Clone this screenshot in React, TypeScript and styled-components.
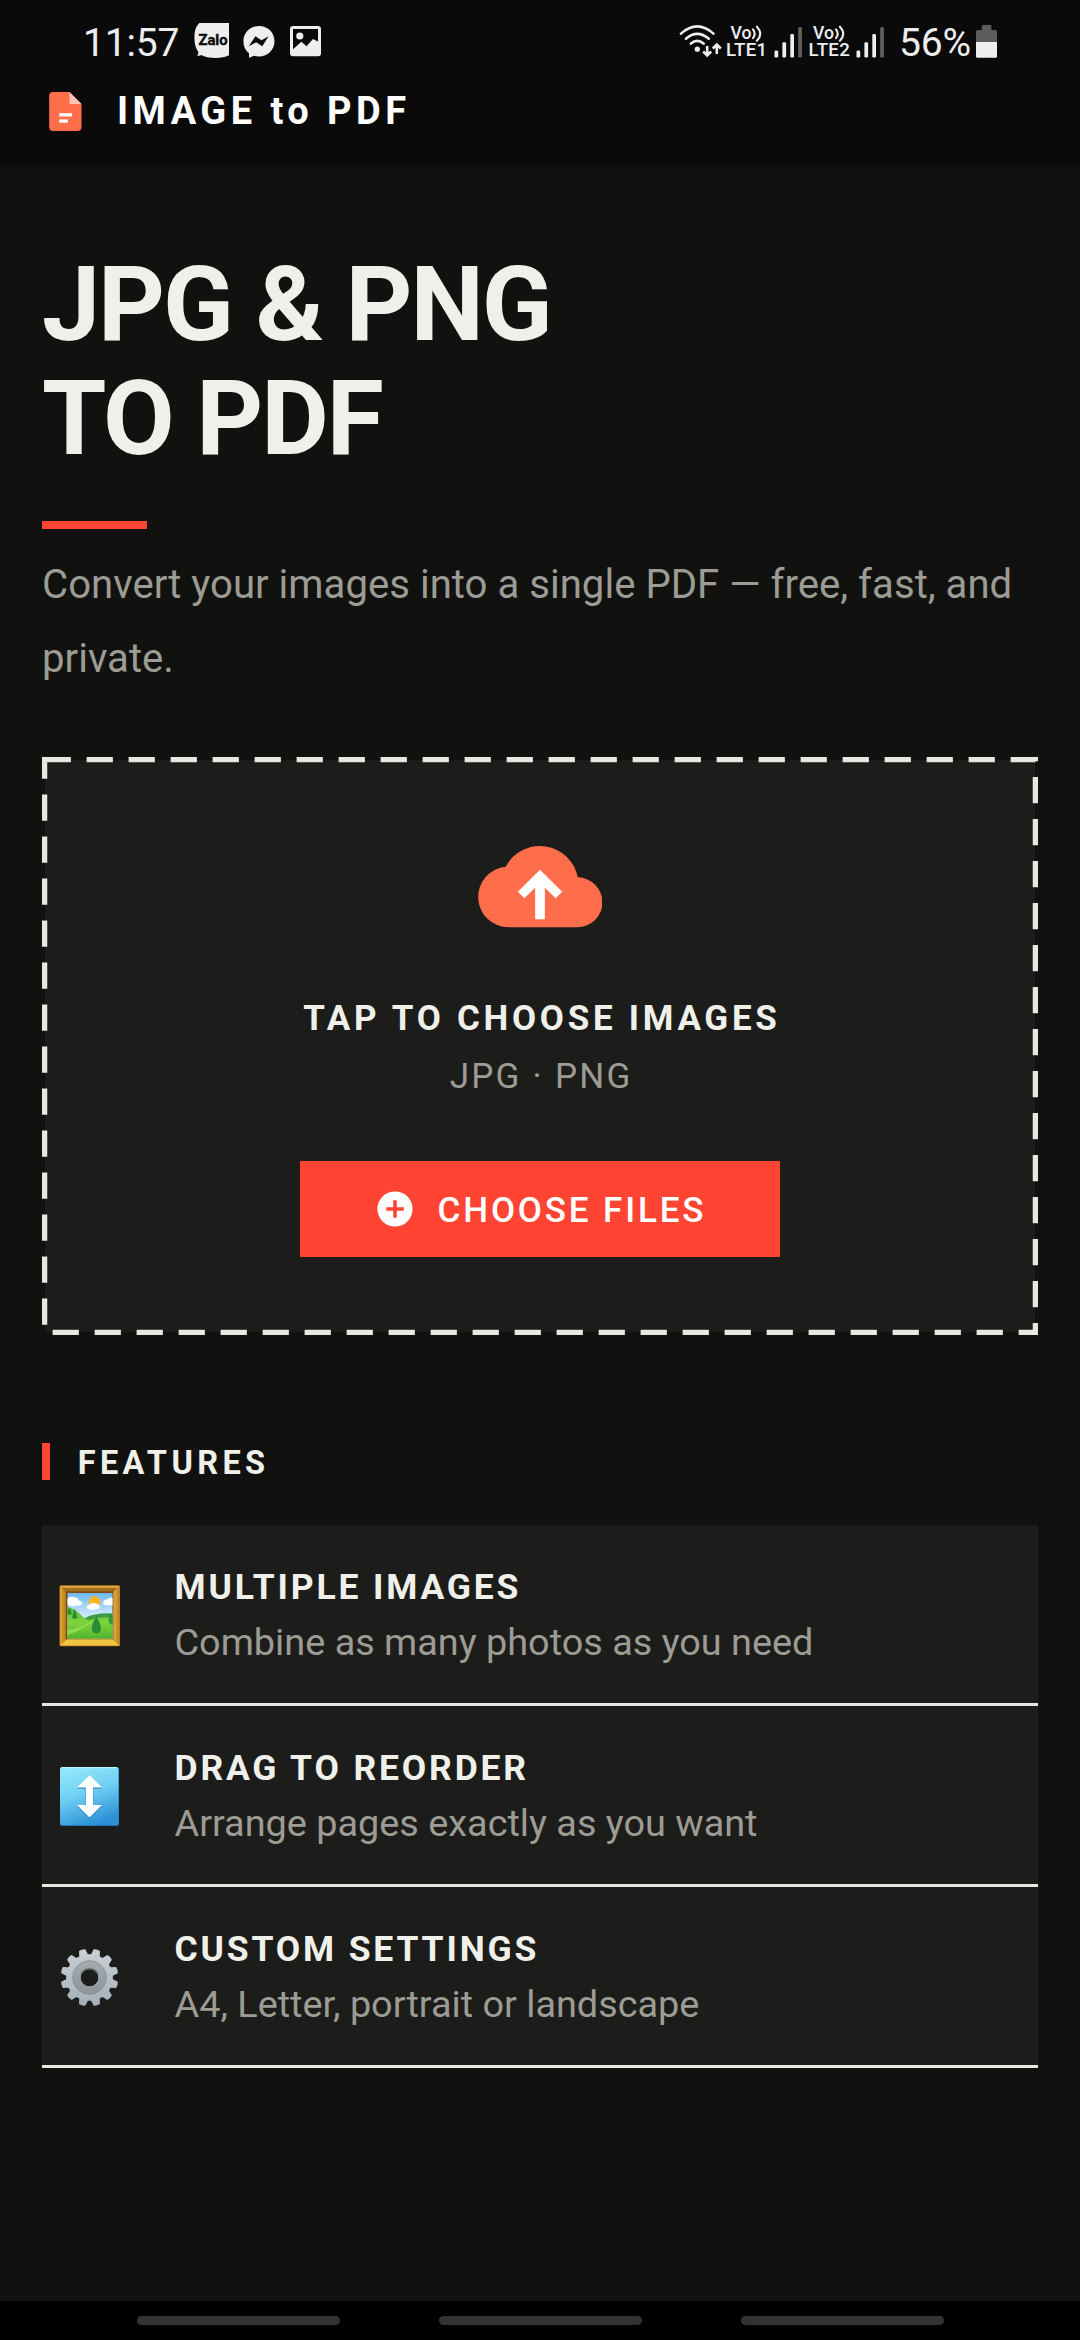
import React from "react";
import styled, { createGlobalStyle } from "styled-components";

const color = {
  header: "#0a0a0a",
  page: "#111110",
  card: "#1c1c1a",
  ink: "#f0f0ea",
  muted: "#9c9c94",
  line: "#e8e8e2",
  accent: "#ff4433",
  coral: "#ff6e4a",
  status: "#eeeeee",
};

const GlobalStyle = createGlobalStyle`
  * { box-sizing: border-box; }
  body {
    margin: 0;
    background: ${color.page};
    font-family: Roboto, "Noto Sans", sans-serif;
    -webkit-font-smoothing: antialiased;
  }
  svg { display: block; flex: none; }
`;

const Screen = styled.div`
  width: 1080px;
  height: 2340px;
  display: flex;
  flex-direction: column;
  background: ${color.page};
  overflow: hidden;
`;

/* ---------- top area ---------- */

const TopArea = styled.header`
  height: 167px;
  background: ${color.header};
`;

const StatusBar = styled.div`
  height: 82px;
  padding: 23px 83px 0 83px;
  display: flex;
  align-items: flex-start;
  justify-content: space-between;
  color: ${color.status};
`;

const StatusGroup = styled.div`
  display: flex;
  align-items: flex-start;
`;

const StatusText = styled.span<{ $width: number }>`
  width: ${(p) => p.$width}px;
  font-size: 39px;
  line-height: 41px;
  letter-spacing: -0.2px;
  white-space: nowrap;
`;

const Notifications = styled.div`
  display: flex;
  gap: 14px;
`;

const NetworkGroup = styled.div`
  display: flex;
  align-items: flex-start;
  gap: 2px;
  margin-right: 9.8px;
`;

const Sim = styled.div`
  display: flex;
  align-items: flex-start;
`;

const NetworkLabel = styled.div`
  width: 44.6px;
  display: flex;
  flex-direction: column;
  font-weight: 500;
`;

const VoiceLine = styled.div`
  height: 19px;
  padding-left: 4.5px;
  display: flex;
  font-size: 17.6px;
  line-height: 20px;
`;

const LteLine = styled.div`
  font-size: 18.6px;
  line-height: 17px;
  letter-spacing: 0.3px;
`;

const AppBar = styled.div`
  height: 85px;
  padding: 10px 49px 0;
  display: flex;
  align-items: flex-start;
`;

const AppName = styled.div`
  margin-left: 35px;
  font-size: 38px;
  font-weight: 700;
  line-height: 39px;
  letter-spacing: 4.47px;
  color: #fff;
`;

/* ---------- content ---------- */

const Main = styled.main`
  height: 2134px;
  padding: 81px 42px 0;
`;

const Title = styled.h1`
  margin: 0;
  font-size: 104px;
  font-weight: 700;
  line-height: 114px;
  letter-spacing: -2.09px;
  color: ${color.ink};
`;

const Rule = styled.div`
  width: 105px;
  height: 8px;
  margin-top: 45px;
  background: ${color.accent};
`;

const Lead = styled.p`
  margin: 19px 0 0;
  font-size: 40.15px;
  line-height: 74px;
  color: ${color.muted};
`;

const DropZone = styled.section`
  position: relative;
  height: 578px;
  margin-top: 61px;
  padding-top: 86px;
  border: 3px solid transparent;
  background: ${color.card};
  background-clip: padding-box;
  display: flex;
  flex-direction: column;
  align-items: center;
`;

const DashedOutline = styled.svg`
  position: absolute;
  inset: -3px;
`;

const DropTitle = styled.div`
  margin: 71px -3.72px 0 0;
  font-size: 35px;
  font-weight: 700;
  line-height: 40px;
  letter-spacing: 3.72px;
  color: ${color.ink};
`;

const DropHint = styled.div`
  margin: 18px -2.24px 0 0;
  font-size: 35px;
  line-height: 40px;
  letter-spacing: 2.24px;
  color: ${color.muted};
`;

const ChooseButton = styled.button`
  width: 480px;
  height: 96px;
  margin: 64px 0 0;
  padding: 0 0 0 77px;
  border: 0;
  display: flex;
  align-items: center;
  gap: 24.5px;
  background: ${color.accent};
  font-family: inherit;
  font-size: 35px;
  font-weight: 500;
  letter-spacing: 2.85px;
  color: #fff;
`;

const ButtonLabel = styled.span`
  padding-top: 2px;
`;

const SectionHeading = styled.h2`
  height: 37px;
  margin: 108px 0 0;
  padding: 2px 0 0 27.7px;
  border-left: 8px solid ${color.accent};
  font-size: 32.5px;
  font-weight: 700;
  line-height: 37px;
  letter-spacing: 4.39px;
  color: ${color.ink};
`;

const FeatureList = styled.ul`
  margin: 45px 0 0;
  padding: 0;
  list-style: none;
`;

const FeatureRow = styled.li`
  height: 181px;
  padding: 2px 0 0 16px;
  display: flex;
  align-items: center;
  background: ${color.card};
  border-bottom: 3px solid ${color.line};
`;

const FeatureText = styled.div`
  margin-left: 53.5px;
  display: flex;
  flex-direction: column;
  gap: 12px;
`;

const FeatureName = styled.div`
  font-size: 35.5px;
  font-weight: 700;
  line-height: 43px;
  letter-spacing: 2.83px;
  color: ${color.ink};
`;

const FeatureNote = styled.div`
  font-size: 37.85px;
  line-height: 43px;
  color: ${color.muted};
`;

const NavBar = styled.nav`
  height: 39px;
  padding-top: 15px;
  display: flex;
  justify-content: center;
  gap: 99px;
  background: #000;
`;

const NavPill = styled.span`
  width: 203px;
  height: 9px;
  border-radius: 5px;
  background: #333;
`;

/* ---------- drawings ---------- */

const ZaloIcon = () => (
  <svg width="35" height="35" viewBox="-0.4 0 35 35">
    <path
      d="M5 0H36V31.5C32 34 27 34.9 21.5 34.9C15 34.9 10 34 7 32C6 32.6 4.5 32.9 2.6 32.4C3.8 31.4 4.2 30.2 3.8 28.8C1.4 25.5 0 21 0 15C0 8 1.6 3 5 0Z"
      fill={color.status}
    />
    <text
      x="4"
      y="21.8"
      fontFamily="Roboto, sans-serif"
      fontSize="14.8"
      fontWeight="700"
      fill={color.header}
      stroke={color.header}
      strokeWidth="0.4"
    >
      Zalo
    </text>
  </svg>
);

const MessengerIcon = () => (
  <svg width="33" height="36" viewBox="0 0 33 36">
    <path
      d="M16 3C24.8 3 31.5 9.6 31.5 18.2S24.8 33.4 16 33.4C14 33.4 12.4 33.2 11 32.7L6 34.8V30.2C2.4 27.6 .4 23.4 .4 18.2C.4 9.6 7.2 3 16 3Z"
      fill={color.status}
    />
    <path d="M5.8 23.3L12.4 13.3L18.5 17.2L25.6 13.3L19.3 23.3L13.2 19.2Z" fill={color.header} />
  </svg>
);

const GalleryIcon = () => (
  <svg width="31" height="36" viewBox="0 0 31 36">
    <rect y="3" width="31" height="30.2" rx="3" fill={color.status} />
    <path d="M3 6H28V18.5L23 16L16.5 23.2L11.4 18.8L3 26.2Z" fill={color.header} />
    <circle cx="9.8" cy="13" r="3.6" fill={color.status} />
  </svg>
);

const WifiIcon = () => (
  <svg width="47" height="36" viewBox="0 0 47 36">
    <g fill="none" stroke={color.status} strokeWidth="2.6" strokeLinecap="round">
      <path d="M2 10.6Q18.2 -3.8 34.4 10.6" />
      <path d="M6.9 15.7Q18.2 6 29.8 15.7" />
      <path d="M11.9 20.6Q18.2 15.2 24.6 20.6" />
    </g>
    <circle cx="18.3" cy="26.2" r="2.6" fill={color.status} />
    <g fill="none" stroke={color.status} strokeWidth="2.6">
      <path d="M28.2 23V32M24.2 28.5L28.2 32.5L32.2 28.5" />
      <path d="M37.8 31V22M33.8 25.5L37.8 21.5L41.8 25.5" />
    </g>
  </svg>
);

const VoiceWaves = () => (
  <svg width="14" height="19" viewBox="0 0 14 19">
    <g fill="none" stroke={color.status} strokeWidth="2.1" strokeLinecap="round">
      <path d="M2 6.4Q5.4 10.8 2 15.2" />
      <path d="M5.900 3.700Q12.600 10.700 5.900 17.700" />
    </g>
  </svg>
);

const SignalBars = () => (
  <svg width="36" height="36" viewBox="0 0 36 36">
    <rect x="3.500" y="27.600" width="3.700" height="7" rx="1.400" fill={color.status} />
    <rect x="11.400" y="19.200" width="3.700" height="15.400" rx="1.400" fill={color.status} />
    <rect x="19.300" y="11" width="3.700" height="23.600" rx="1.400" fill={color.status} />
    <rect x="27.200" y="4" width="3.700" height="30.600" rx="1.400" fill="#606060" />
  </svg>
);

const BatteryIcon = () => (
  <svg width="21" height="36" viewBox="0 0 21 36">
    <path d="M7.2 2H14Q15.4 2 15.4 3.4V7H19.5Q21 7 21 8.5V19H0V8.5Q0 7 1.5 7H5.8V3.4Q5.8 2 7.2 2Z" fill="#5c5c5c" />
    <path d="M0 19H21V33.2Q21 34.8 19.4 34.8H1.6Q0 34.8 0 33.2Z" fill={color.status} />
  </svg>
);

const DocumentIcon = () => (
  <svg width="33" height="39" viewBox="0 0 33 39">
    <path d="M4 0H20.5L32.5 12V35Q32.5 39 28.5 39H4Q.2 39 .2 35V4Q.2 0 4 0Z" fill={color.coral} />
    <path d="M20.5 0L32.5 12H20.5Z" fill="#ffc4b6" />
    <rect x="10.3" y="21.2" width="12.8" height="3.3" fill="#fff" />
    <rect x="10.3" y="27.4" width="8.5" height="3.3" fill="#fff" />
  </svg>
);

const CloudUploadIcon = () => (
  <svg width="124" height="82" viewBox="114 79 372 246">
    <path
      d="M205 323A91 91 0 0 1 197 141.4A116 116 0 0 1 413.5 173A75 75 0 0 1 411 323Z"
      fill={color.coral}
    />
    <path d="M300 150L366.5 216.5L347 236L314.5 204.5V299H285.5V204.5L253 236L233.5 216.5Z" fill="#fff" />
  </svg>
);

const PlusCircleIcon = () => (
  <svg width="36" height="36" viewBox="0 0 36 36">
    <circle cx="18" cy="18" r="17.6" fill="#fff" />
    <path d="M18 9.2V26.8M9.2 18H26.8" stroke={color.accent} strokeWidth="3.6" />
  </svg>
);

const PictureEmoji = () => (
  <svg width="63" height="63" viewBox="0 0 63 63">
    <defs>
      <linearGradient id="sky" x1="0" y1="0" x2="0" y2="1">
        <stop offset="0" stopColor="#6db8f2" />
        <stop offset="0.55" stopColor="#d8f0fb" />
      </linearGradient>
      <linearGradient id="grass" x1="0" y1="0" x2="0" y2="1">
        <stop offset="0" stopColor="#5db834" />
        <stop offset="0.5" stopColor="#7fd33c" />
        <stop offset="1" stopColor="#4fb52d" />
      </linearGradient>
      <linearGradient id="sideFrame" x1="0" y1="0" x2="1" y2="0">
        <stop offset="0" stopColor="#dfa53a" />
        <stop offset="0.6" stopColor="#c98a26" />
        <stop offset="1" stopColor="#9b6417" />
      </linearGradient>
      <linearGradient id="sideFrameRight" x1="0" y1="0" x2="1" y2="0">
        <stop offset="0" stopColor="#e9b94c" />
        <stop offset="1" stopColor="#bd7d20" />
      </linearGradient>
    </defs>
    <rect x="1.5" y="1.3" width="60.5" height="61" rx="1.5" fill="#b87a1f" />
    <path d="M2 2L9 9V54L2 61.5Z" fill="url(#sideFrame)" />
    <path d="M61.5 2L54.5 9V54L61.5 61.5Z" fill="url(#sideFrameRight)" />
    <path d="M2 2H61.5L54.5 8.5H9Z" fill="#a56c1c" />
    <path d="M2 2H61.5L60 3.8H3.6Z" fill="#e3ac45" />
    <path d="M9 55H54.5L61.5 61.5H2Z" fill="#f2c643" />
    <rect x="8" y="7.3" width="47.4" height="48" fill="#7a4c10" />
    <rect x="9.5" y="9" width="45" height="45.5" fill="url(#sky)" />
    <circle cx="36.500" cy="17.600" r="5.600" fill="#f9b51c" />
    <g fill="#fff">
      <path d="M9.500 15Q12 11.500 16 13.300Q20 13.200 20.500 16.500Q25 17 24 20.500Q22.500 22 18 21.500Q13 23.500 9.500 20.500Z" />
      <path d="M28.500 23.500Q29 20.300 32 20.600Q34 17.400 37.300 19.500Q41.500 19.500 41.500 23Q41 25.500 37 25.300Q31 27 28.500 23.500Z" />
      <path d="M54.500 14Q51.500 12.500 50 15.300Q45.500 15.500 45 19Q45.500 21.500 50 21.300H54.500Z" />
    </g>
    <path d="M27 34Q37 28.500 54.500 29.500V42H27Z" fill="#3e9c48" />
    <path d="M9.500 23Q17 24.500 24 32Q30 37.500 34 35.500Q45 32 54.500 34V54.500H9.500Z" fill="url(#grass)" />
    <path d="M9.500 46Q22 46 36 35Q27 45 9.500 51Z" fill="#a4e858" opacity="0.7" />
    <g fill="#278d34">
      <path d="M38.300 33.500Q41.800 37 43 44Q43 49.500 38.500 49.300Q34 49.500 33.800 44Q34.800 37 38.300 33.500Z" />
      <path d="M16.500 24.500L19.500 33.500Q16.500 36 14 33.500Z" />
      <path d="M11.500 23.500L14 30.500H9.500V27Z" />
      <path d="M51.500 30Q54 30 54.500 32V41Q50 40 50.500 35Z" opacity="0.8" />
    </g>
  </svg>
);

const UpDownEmoji = () => (
  <svg width="63" height="63" viewBox="0 0 63 63">
    <defs>
      <linearGradient id="tile" x1="0.25" y1="0" x2="0.6" y2="1">
        <stop offset="0" stopColor="#94e6fa" />
        <stop offset="0.45" stopColor="#6fd0f3" />
        <stop offset="1" stopColor="#2a8fd6" />
      </linearGradient>
    </defs>
    <rect x="2" y="2" width="59" height="59" rx="2.5" fill="#2277b8" />
    <rect x="2" y="2" width="58.5" height="58" rx="2.5" fill="url(#tile)" />
    <path d="M3.5 2.7H59" stroke="#b9f3ff" strokeWidth="1.2" />
    <path d="M31.5 11.3L44.2 23.8H35.4V41H44.2L31.5 53.7L18.8 41H27.6V23.8H18.8Z" fill="#2473aa" opacity="0.75" />
    <path d="M31.5 10.2L44 22.5H35V40H44L31.5 52.5L19 40H28V22.5H19Z" fill="#fff" />
  </svg>
);

const gearOutline = Array.from({ length: 12 }, (_, i) => {
  const middle = ((i * 30 + 15) * Math.PI) / 180;
  const point = (radius: number, offset: number) => {
    const angle = middle + (offset * Math.PI) / 180;
    return `${(31.5 + radius * Math.sin(angle)).toFixed(2)} ${(31.5 - radius * Math.cos(angle)).toFixed(2)}`;
  };
  return `${i ? "L" : "M"}${point(23.4, -11)}L${point(28.6, -6.5)}Q${point(29.6, 0)} ${point(28.6, 6.5)}L${point(23.4, 11)}`;
}).join("");

const GearEmoji = () => (
  <svg width="63" height="63" viewBox="0 0 63 63">
    <defs>
      <linearGradient id="steel" x1="0" y1="0" x2="0" y2="1">
        <stop offset="0" stopColor="#c9d0d5" />
        <stop offset="1" stopColor="#a3b0b8" />
      </linearGradient>
      <linearGradient id="hub" x1="0" y1="0" x2="0" y2="1">
        <stop offset="0" stopColor="#a3a8ac" />
        <stop offset="1" stopColor="#90989e" />
      </linearGradient>
    </defs>
    <path
      d={`${gearOutline}ZM31.5 22.4A9.1 9.1 0 1 0 31.5 40.6A9.1 9.1 0 1 0 31.5 22.4Z`}
      fillRule="evenodd"
      fill="url(#steel)"
    />
    <circle cx="31.5" cy="31.5" r="12.8" fill="none" stroke="url(#hub)" strokeWidth="7.6" />
    <circle cx="31.5" cy="31.5" r="16.7" fill="none" stroke="#7d868c" strokeWidth="0.8" />
    <path d="M23.200 28.500A9 9 0 0 1 39.800 28.500" fill="none" stroke="#5b6165" strokeWidth="1.400" />
  </svg>
);

/* ---------- screen ---------- */

const features = [
  { icon: <PictureEmoji />, name: "MULTIPLE IMAGES", note: "Combine as many photos as you need" },
  { icon: <UpDownEmoji />, name: "DRAG TO REORDER", note: "Arrange pages exactly as you want" },
  { icon: <GearEmoji />, name: "CUSTOM SETTINGS", note: "A4, Letter, portrait or landscape" },
];

const SimStatus = ({ slot }: { slot: number }) => (
  <Sim>
    <NetworkLabel>
      <VoiceLine>
        Vo
        <VoiceWaves />
      </VoiceLine>
      <LteLine>LTE{slot}</LteLine>
    </NetworkLabel>
    <SignalBars />
  </Sim>
);

export default function App() {
  return (
    <Screen>
      <GlobalStyle />
      <TopArea>
        <StatusBar>
          <StatusGroup>
            <StatusText $width={111}>11:57</StatusText>
            <Notifications>
              <ZaloIcon />
              <MessengerIcon />
              <GalleryIcon />
            </Notifications>
          </StatusGroup>
          <StatusGroup>
            <WifiIcon />
            <NetworkGroup>
              <SimStatus slot={1} />
              <SimStatus slot={2} />
            </NetworkGroup>
            <StatusText $width={77}>56%</StatusText>
            <BatteryIcon />
          </StatusGroup>
        </StatusBar>
        <AppBar>
          <DocumentIcon />
          <AppName>IMAGE to PDF</AppName>
        </AppBar>
      </TopArea>

      <Main>
        <Title>
          JPG &amp; PNG
          <br />
          TO PDF
        </Title>
        <Rule />
        <Lead>Convert your images into a single PDF — free, fast, and private.</Lead>

        <DropZone>
          <DashedOutline width="996" height="578" viewBox="0 0 996 578">
            <rect
              x="2.625"
              y="2.625"
              width="990.75"
              height="572.75"
              fill="none"
              stroke={color.line}
              strokeWidth="5.25"
              strokeDasharray="26.25 15.75"
            />
          </DashedOutline>
          <CloudUploadIcon />
          <DropTitle>TAP TO CHOOSE IMAGES</DropTitle>
          <DropHint>JPG · PNG</DropHint>
          <ChooseButton>
            <PlusCircleIcon />
            <ButtonLabel>CHOOSE FILES</ButtonLabel>
          </ChooseButton>
        </DropZone>

        <SectionHeading>FEATURES</SectionHeading>
        <FeatureList>
          {features.map((feature) => (
            <FeatureRow key={feature.name}>
              {feature.icon}
              <FeatureText>
                <FeatureName>{feature.name}</FeatureName>
                <FeatureNote>{feature.note}</FeatureNote>
              </FeatureText>
            </FeatureRow>
          ))}
        </FeatureList>
      </Main>

      <NavBar>
        <NavPill />
        <NavPill />
        <NavPill />
      </NavBar>
    </Screen>
  );
}
